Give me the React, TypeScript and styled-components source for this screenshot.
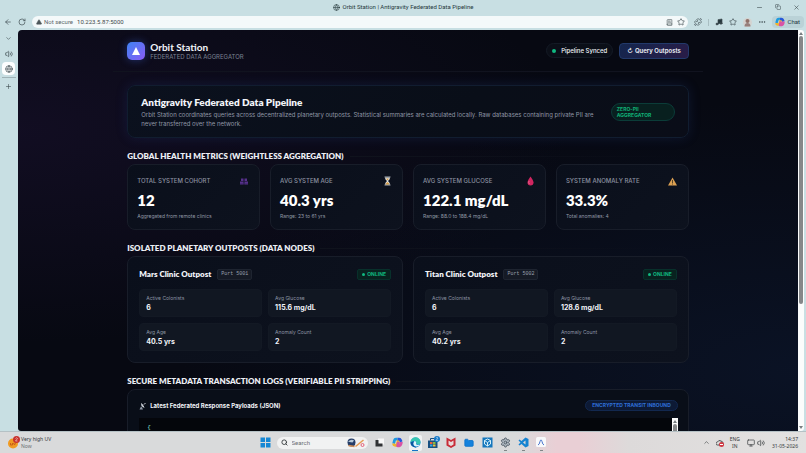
import React from "react";
import styled, { createGlobalStyle } from "styled-components";
import {
  ArrowLeft, RotateCw, ChevronDown, ChevronUp, Volume2, Globe, Plus, Minus, Copy, X, Star, Puzzle,
  Ellipsis, Search, Music, BookText, TriangleAlert, Monitor, Folder, Settings,
} from "lucide-react";

const chrome = `Roboto, "Open Sans", sans-serif`;
const ui = `"Noto Sans", "Open Sans", sans-serif`;
const body = `Inter, "Liberation Sans", sans-serif`;
const display = `Lato, Inter, sans-serif`;

const GlobalStyle = createGlobalStyle`
  *, *::before, *::after { box-sizing: border-box; }
  body { margin: 0; background: #c8dfe3; font-family: ${body}; }
  h1, h2, h3, p, dl, dt, dd { margin: 0; font-weight: inherit; }
  button, input { font: inherit; color: inherit; border: 0; padding: 0; margin: 0; background: none; outline: none; }
  svg { display: block; flex: none; }
`;

/* ---------- browser window ---------- */

const Desktop = styled.div`
  display: grid;
  grid-template-rows: auto auto minmax(0, 1fr) auto;
  height: 100vh;
  background: #c8dfe3;
  color: #3c4a4e;
`;

const TitleBar = styled.header`
  display: grid;
  grid-template-columns: 1fr auto 1fr;
  align-items: center;
  height: 14px;
  font: 6px/14px ${chrome};
`;

const PageTitle = styled.div`
  grid-column: 2;
  display: flex;
  align-items: center;
  gap: 3px;
  color: #26383d;
`;

const WindowButtons = styled.div`
  display: flex;
  justify-content: flex-end;
  gap: 12px;
  padding-right: 6px;
`;

const IconButton = styled.button`
  display: grid;
  place-items: center;
  flex: none;
`;

const ToolBar = styled.div`
  display: flex;
  align-items: center;
  gap: 6px;
  height: 16px;
  padding: 0 2px 0 4px;
`;

const AddressBar = styled.div`
  flex: 1;
  display: flex;
  align-items: center;
  gap: 4px;
  height: 12px;
  padding: 0 3px 0 4px;
  border-radius: 6px;
  background: #f4f9fa;
  font: 6px/12px ${chrome};
`;

const SecurityButton = styled.button`
  display: flex;
  align-items: center;
  gap: 2px;
  color: #5c6669;
`;

const AddressInput = styled.input`
  flex: 1;
  min-width: 0;
  height: 12px;
  color: #3f484b;
`;

const Tools = styled.div`
  display: flex;
  align-items: center;
  gap: 6px;
`;

const Divider = styled.span`
  width: 1px;
  height: 7px;
  background: #a9bec2;
`;

const ChatButton = styled.button`
  display: flex;
  align-items: center;
  gap: 3px;
  height: 12px;
  padding: 0 4px 0 3px;
  border-radius: 4px;
  background: #bad2d7;
  font: 6px/12px ${chrome};
  color: #26383d;
`;

const Workspace = styled.div`
  display: grid;
  grid-template-columns: 18px minmax(0, 1fr) 8px;
  min-height: 0;
`;

const TabRail = styled.nav`
  display: flex;
  flex-direction: column;
  align-items: center;
  gap: 1px;
  padding: 2px 1px 0 0;
`;

const RailButton = styled(IconButton)<{ $active?: boolean }>`
  width: 13px;
  height: 13px;
  margin-bottom: 1px;
  border-radius: 4px;
  background: ${(p) => (p.$active ? "#fdfefe" : "transparent")};
`;

const RailLine = styled.span`
  width: 14px;
  height: 1px;
  margin-bottom: 1px;
  background: #9fb2b6;
`;

const ScrollTrack = styled.div`
  display: flex;
  flex-direction: column;
  align-items: center;
  gap: 1px;
  width: 6px;
  padding: 2px 0;
  background: #fbfcfc;
  border-radius: 0 3px 3px 0;
`;

const Arrow = styled.span<{ $down?: boolean }>`
  border: 2px solid transparent;
  border-top-width: ${(p) => (p.$down ? "3px" : "0")};
  border-bottom-width: ${(p) => (p.$down ? "0" : "3px")};
  border-${(p) => (p.$down ? "top" : "bottom")}-color: #777d80;
`;

const Thumb = styled.span<{ $share: number }>`
  flex: ${(p) => p.$share} 0 0;
  width: 4px;
  border-radius: 2px;
  background: #858789;
`;

const Rest = styled.span<{ $share: number }>`
  flex: ${(p) => p.$share} 0 0;
`;

/* ---------- dashboard ---------- */

const Viewport = styled.main`
  overflow: hidden;
  min-height: 0;
  border-top-left-radius: 4px;
  border-bottom-left-radius: 3px;
  background:
    radial-gradient(ellipse at 0% 25%, rgba(48, 26, 80, 0.26), transparent 50%),
    radial-gradient(ellipse at 100% 85%, rgba(18, 40, 80, 0.3), transparent 56%),
    #070912;
  color: #f2f4f9;
`;

const Column = styled.div`
  width: 72%;
  max-width: 1080px;
  margin: 0 auto;
`;

const SiteHeader = styled.div`
  display: flex;
  align-items: center;
  justify-content: space-between;
  height: 42px;
  margin: 0 -14px 13px;
  padding: 0 14px;
  border-bottom: 1px solid #11131f;
`;

const Brand = styled.div`
  display: flex;
  align-items: center;
  gap: 5px;
`;

const Logo = styled.span`
  display: grid;
  place-items: center;
  width: 18px;
  height: 18px;
  border-radius: 5px;
  background: linear-gradient(135deg, #3f83f4, #8a5bf5);
  box-shadow: 0 0 8px rgba(66, 110, 240, 0.4);
`;

const BrandName = styled.h1`
  font: 700 10px/11px ${display};
`;

const BrandTag = styled.p`
  font: 6px/7px ${body};
  color: #7b8192;
`;

const Actions = styled.div`
  display: flex;
  align-items: center;
  gap: 6px;
`;

const SyncPill = styled.span`
  display: flex;
  align-items: center;
  gap: 5px;
  height: 15px;
  padding: 0 5px;
  border: 1px solid #141a25;
  border-radius: 8px;
  background: #0b0f18;
  font: 500 6px/13px ${body};
`;

const Dot = styled.i<{ $size: number }>`
  width: ${(p) => p.$size}px;
  height: ${(p) => p.$size}px;
  border-radius: 50%;
  background: #10b981;
`;

const QueryButton = styled.button`
  display: flex;
  align-items: center;
  gap: 2px;
  height: 16px;
  padding: 0 7px;
  border: 1px solid #22396a;
  border-radius: 4px;
  background: linear-gradient(135deg, #14264e, #291c47);
  font: 600 6px/14px ${body};
`;

const Banner = styled.section`
  display: flex;
  align-items: center;
  justify-content: space-between;
  gap: 14px;
  min-height: 53px;
  margin-bottom: 13px;
  padding: 0 13px;
  border: 1px solid #111d30;
  border-radius: 8px;
  background: linear-gradient(120deg, #0b111e, #090e18 60%, #0a0d18);
  box-shadow: 0 0 12px rgba(38, 62, 140, 0.24);
`;

const BannerTitle = styled.h2`
  margin-bottom: 2px;
  font: 800 10px/12px ${display};
`;

const BannerText = styled.p`
  font: 6px/9px ${body};
  color: #9097a6;
`;

const ZeroPii = styled.span`
  flex: none;
  width: 64px;
  padding: 2px 5px;
  border: 1px solid #0b3c38;
  border-radius: 9px;
  background: #08201f;
  font: 700 5px/6px ${body};
  color: #10b077;
`;

const SectionTitle = styled.h2`
  display: flex;
  align-items: center;
  gap: 6px;
  margin-bottom: 3px;
  font: 800 8px/10px ${display};
  color: #eceef4;
  &::after {
    content: "";
    flex: 1;
    height: 1px;
    background: linear-gradient(90deg, #10131d, transparent);
  }
`;

const Grid = styled.div<{ $columns: number; $gap: number }>`
  display: grid;
  grid-template-columns: repeat(${(p) => p.$columns}, minmax(0, 1fr));
  gap: ${(p) => p.$gap}px;
`;

const Cards = styled(Grid)`
  margin-bottom: 13px;
`;

const Card = styled.article`
  padding: 11px;
  border: 1px solid #181d29;
  border-radius: 8px;
  background: linear-gradient(135deg, #0a0f1b, #0d121e);
`;

const MetricCard = styled(Card)`
  padding: 10px 10px 9px 9px;
`;

const MetricHead = styled.div`
  display: flex;
  align-items: center;
  justify-content: space-between;
  height: 12px;
  margin-bottom: 5px;
  padding-right: 1px;
  font: 500 6px/12px ${body};
  color: #8c92a1;
`;

const MetricValue = styled.p`
  margin-bottom: 4px;
  font: 800 15px/17px ${display};
  color: #fff;
`;

const MetricNote = styled.p`
  font: 5px/7px ${body};
  color: #9299a7;
`;

const NodeHead = styled.div`
  display: flex;
  align-items: center;
  gap: 6px;
  height: 12px;
  margin-bottom: 9px;
`;

const NodeName = styled.h3`
  font: 800 8px/12px ${display};
`;

const Port = styled.code`
  padding: 0 3px;
  border: 1px solid #1e2430;
  border-radius: 2px;
  background: #151a25;
  font: 5px/9px "Liberation Mono", monospace;
  color: #9aa0ad;
`;

const Online = styled.span`
  display: flex;
  align-items: center;
  gap: 2px;
  margin-left: auto;
  padding: 0 4px;
  border: 1px solid #08302b;
  border-radius: 2px;
  background: #08221f;
  font: 700 5px/9px ${body};
  color: #10b981;
`;

const Stats = styled.dl`
  display: grid;
  grid-template-columns: repeat(2, minmax(0, 1fr));
  gap: 6px;
`;

const Stat = styled.div`
  height: 28px;
  padding: 5px 6px;
  border: 1px solid #131924;
  border-radius: 4px;
  background: #111722;
`;

const StatLabel = styled.dt`
  font: 5px/7px ${body};
  color: #8d94a3;
`;

const StatValue = styled.dd`
  margin-top: 1px;
  font: 700 7px/9px ${body};
`;

const LogHead = styled.div`
  display: flex;
  align-items: center;
  justify-content: space-between;
  height: 11px;
  margin-bottom: 7px;
`;

const LogTitle = styled.h3`
  display: flex;
  align-items: center;
  gap: 4px;
  font: 700 6px/11px ${body};
`;

const Transit = styled.span`
  padding: 0 6px;
  border: 1px solid #12284f;
  border-radius: 6px;
  background: #0d1a35;
  font: 700 5px/9px ${body};
  color: #2f70d8;
`;

const LogCard = styled(Card)`
  padding: 10px 10px 10px 11px;
  background: #090e18;
`;

const LogBox = styled.div`
  display: flex;
  justify-content: space-between;
  height: 120px;
  padding-left: 8px;
  background: #04060b;
`;

const Json = styled.pre`
  margin: 0;
  padding-top: 7px;
  font: 6px/6px "Liberation Mono", monospace;
  color: #8ee6dc;
`;

const LogScroll = styled(ScrollTrack)`
  border-radius: 0;
`;

/* ---------- taskbar ---------- */

const TaskBar = styled.footer`
  display: grid;
  grid-template-columns: 1fr auto 1fr;
  align-items: center;
  height: 22px;
  padding: 0 8px;
  border-top: 1px solid #b5c1c5;
  background: linear-gradient(90deg, #d9dadb 0 64%, #e9cfd5 69% 72%, #dddada 78%, #e2e1e0);
  font: 5px/7px ${ui};
  color: #34383a;
`;

const Weather = styled.button`
  display: flex;
  align-items: center;
  gap: 1px;
  text-align: left;
  line-height: 7px;
`;

const Muted = styled.span`
  display: block;
  color: #6b6f72;
`;

const Apps = styled.div`
  display: flex;
  align-items: center;
  gap: 5px;
`;

const AppButton = styled(IconButton)<{ $state?: "active" | "running" }>`
  position: relative;
  width: 13px;
  height: 16px;
  border-radius: 2px;
  background: ${(p) => (p.$state === "active" ? "#f0f2f3" : "transparent")};
  &::after {
    content: "";
    position: absolute;
    bottom: 0;
    width: ${(p) => (p.$state === "active" ? "6px" : "3px")};
    height: 1px;
    background: ${(p) => (p.$state === "active" ? "#1374c9" : p.$state ? "#828688" : "transparent")};
  }
`;

const SearchBox = styled.label`
  display: flex;
  align-items: center;
  gap: 4px;
  width: 91px;
  height: 12px;
  padding: 0 3px 0 4px;
  border-radius: 6px;
  background: #f1f2f2;
  font: 6px/12px ${chrome};
`;

const SearchInput = styled.input`
  flex: 1;
  min-width: 0;
  &::placeholder { color: #6b6f72; opacity: 1; }
`;

const Tray = styled.div`
  display: flex;
  align-items: center;
  justify-content: flex-end;
  gap: 6px;
`;

const Connectivity = styled.button`
  display: flex;
  gap: 2px;
  padding: 0 1px;
`;

const TrayText = styled.button<{ $align: "center" | "right" }>`
  text-align: ${(p) => p.$align};
  line-height: 7px;
`;

/* ---------- drawings ---------- */

const CopilotMark = ({ size }: { size: number }) => (
  <svg width={size} height={size} viewBox="0 0 20 20" fill="none" strokeWidth="5" strokeLinejoin="round">
    <path d="M10 4H7Q5 4 4.500 6L3 12" stroke="#1e9be0" />
    <path d="M3 12Q3 15 6 15H9L12 5" stroke="#f2b42c" />
    <path d="M10 4H13Q15 4 15.500 6L17 9" stroke="#2758d9" />
    <path d="M17 9Q17 15 13 16H10L12 9" stroke="#d853a5" />
  </svg>
);

const People = () => (
  <svg width="8" height="8" viewBox="0 0 16 16">
    <path d="M2 3H7V8H2ZM9 3H14V8H9ZM0 9H7V15H0ZM9 9H16V15H9Z" fill="#57308c" />
    <path d="M0 12H16V13H0ZM7 9H9V15H7Z" fill="#3b2566" />
  </svg>
);

const Hourglass = () => (
  <svg width="7" height="10" viewBox="0 0 14 20">
    <path d="M1 1H13V3H1ZM1 17H13V19H1Z" fill="#a8adb3" />
    <path d="M2 3H12Q12 7 8 10Q12 13 12 17H2Q2 13 6 10Q2 7 2 3Z" fill="#dfe5e8" />
    <path d="M4 5H10L7 9ZM3 17Q4 13 7 12Q10 13 11 17Z" fill="#d59b45" />
  </svg>
);

const Drop = () => (
  <svg width="7" height="10" viewBox="0 0 14 20">
    <path d="M7 1Q13 9 13 13A6 6 0 0 1 1 13Q1 9 7 1Z" fill="#d02660" />
    <path d="M4 10Q2 14 5 16" fill="none" stroke="#e5618c" strokeWidth="2" />
  </svg>
);

const Warning = () => (
  <svg width="9" height="9" viewBox="0 0 18 18">
    <path d="M9 1L18 17H0Z" fill="#dba052" />
    <path d="M9 6V12M9 13V15" stroke="#5a4526" strokeWidth="2" />
  </svg>
);

const Satellite = () => (
  <svg width="7" height="8" viewBox="0 0 14 16">
    <path d="M5 3Q2 9 10 11Z" fill="#aab1bc" />
    <path d="M5 3L10 11" stroke="#e4e7ec" strokeWidth="2" />
    <path d="M8 7L12 3" stroke="#e4e7ec" strokeWidth="1" />
    <circle cx="12" cy="3" r="1" fill="#e4e7ec" />
    <path d="M4 9L1 15H8L6 11Z" fill="#8f97a5" />
  </svg>
);

const EdgeMark = () => (
  <svg width="11" height="11" viewBox="0 0 22 22">
    <circle cx="11" cy="11" r="10" fill="#117dcc" />
    <path d="M1 11A10 10 0 0 1 21 10Q21 15 15 15Q12 15 13 12Q13 8 9 8Q4 8 1 11Z" fill="#36c6b2" />
    <path d="M9 8Q5 12 8 17Q11 20 17 18Q20 16 19 15Q14 17 12 14Q14 9 9 8Z" fill="#dff5fa" />
    <path d="M8 9Q4 13 8 18Q11 21 15 20A10 10 0 0 1 1 11Q4 8 8 9Z" fill="#0b579f" />
  </svg>
);

const SearchArt = () => (
  <svg width="18" height="10" viewBox="0 0 36 20">
    <circle cx="9" cy="9" r="8" fill="#263e68" /><path d="M2 7Q9 1 14 5L11 9L5 8Z" fill="#b8cad9" />
    <path d="M3 15L15 17" stroke="#d08b52" strokeWidth="3" />
    <path d="M17 17L33 4" stroke="#e59a51" strokeWidth="3" />
    <circle cx="31" cy="14" r="3" fill="none" stroke="#e46078" strokeWidth="2" />
  </svg>
);

const appIcons: { name: string; state?: "active" | "running"; art: React.ReactNode }[] = [
  { name: "Task view", art: <svg width="9" height="9" viewBox="0 0 18 18"><path d="M6 1H18V13H6Z" fill="#f7f7f7" /><path d="M1 4H7V11H15V17H1Z" fill="#303234" /></svg> },
  { name: "Copilot", art: <CopilotMark size={11} /> },
  { name: "Edge", state: "active", art: <EdgeMark /> },
  { name: "Store", art: <svg width="13" height="13" viewBox="0 0 26 26"><path d="M2 9H21V24H2Z" fill="#184f80" /><path d="M7 9V5H15V9" fill="none" stroke="#184f80" strokeWidth="2" /><path d="M6 12H11V16H6Z" fill="#e9603e" /><path d="M12 12H17V16H12Z" fill="#83bd43" /><path d="M6 17H11V21H6Z" fill="#37a9e2" /><path d="M12 17H17V21H12Z" fill="#f1bd3c" /><circle cx="20" cy="6" r="6" fill="#1479c8" /><path d="M18 4Q21 1 22 4L18 9H22" fill="none" stroke="#fff" /></svg> },
  { name: "McAfee", art: <svg width="10" height="11" viewBox="0 0 20 22"><path d="M1 1L10 6L19 1V17L10 22L1 17Z" fill="#c82c38" /><path d="M5 7V15L10 18L15 15V7L10 10Z" fill="#e8dada" /></svg> },
  { name: "Files", art: <Folder size={10} fill="#1482dd" color="#0d72c9" /> },
  { name: "Photos", art: <svg width="11" height="11" viewBox="0 0 22 22"><rect x="1" y="1" width="20" height="20" fill="#1577bd" /><path d="M11 4L17 7V14L11 18L5 14V7ZM5 7L11 11L17 7M11 11V18" fill="none" stroke="#d2effa" strokeWidth="2" /></svg> },
  { name: "Settings", state: "running", art: <Settings size={11} color="#4f5b66" fill="#aeb8c0" /> },
  { name: "Code", state: "running", art: <svg width="11" height="11" viewBox="0 0 22 22"><path fillRule="evenodd" d="M15 1L21 4V18L15 21L7 14L3 17L1 15L5 11L1 7L3 5L7 8ZM15 7L10 11L15 15Z" fill="#1683d1" /></svg> },
  { name: "Antigravity", state: "running", art: <svg width="10" height="11" viewBox="0 0 20 22"><rect width="20" height="20" rx="3" fill="#f8f9fb" /><path d="M4 16Q7 15 8 9Q10 2 12 9Q13 15 16 16" fill="none" stroke="#4774cd" strokeWidth="2" /></svg> },
];

/* ---------- data ---------- */

const metrics = [
  { label: "TOTAL SYSTEM COHORT", value: "12", note: "Aggregated from remote clinics", icon: <People /> },
  { label: "AVG SYSTEM AGE", value: "40.3 yrs", note: "Range: 23 to 61 yrs", icon: <Hourglass /> },
  { label: "AVG SYSTEM GLUCOSE", value: "122.1 mg/dL", note: "Range: 88.0 to 188.4 mg/dL", icon: <Drop /> },
  { label: "SYSTEM ANOMALY RATE", value: "33.3%", note: "Total anomalies: 4", icon: <Warning /> },
];

const nodes = [
  { name: "Mars Clinic Outpost", port: "Port 5001", stats: [["Active Colonists", "6"], ["Avg Glucose", "115.6 mg/dL"], ["Avg Age", "40.5 yrs"], ["Anomaly Count", "2"]] },
  { name: "Titan Clinic Outpost", port: "Port 5002", stats: [["Active Colonists", "6"], ["Avg Glucose", "128.6 mg/dL"], ["Avg Age", "40.2 yrs"], ["Anomaly Count", "2"]] },
];

export default function App() {
  return (
    <Desktop>
      <GlobalStyle />
      <TitleBar>
        <PageTitle><Globe size={7} />Orbit Station | Antigravity Federated Data Pipeline</PageTitle>
        <WindowButtons>
          <IconButton aria-label="Minimize"><Minus size={7} /></IconButton>
          <IconButton aria-label="Restore"><Copy size={6} /></IconButton>
          <IconButton aria-label="Close"><X size={7} /></IconButton>
        </WindowButtons>
      </TitleBar>
      <ToolBar>
        <IconButton aria-label="Back"><ArrowLeft size={8} /></IconButton>
        <IconButton aria-label="Reload"><RotateCw size={8} /></IconButton>
        <AddressBar>
          <SecurityButton>
            <TriangleAlert size={6} fill="#4b5558" />Not secure
          </SecurityButton>
          <AddressInput aria-label="Address" defaultValue="10.223.5.87:5000" />
          <IconButton aria-label="Reader"><BookText size={7} /></IconButton>
          <IconButton aria-label="Favorite"><Star size={8} /></IconButton>
        </AddressBar>
        <Tools>
          <IconButton aria-label="Extensions"><Puzzle size={8} /></IconButton>
          <Divider />
          <IconButton aria-label="Media"><Music size={8} fill="#26383d" /></IconButton>
          <IconButton aria-label="Favorites"><Star size={8} /></IconButton>
          <IconButton aria-label="Profile">
            <svg width="9" height="9" viewBox="0 0 18 18"><circle cx="9" cy="9" r="9" fill="#d4d3d0" /><circle cx="9" cy="6" r="4" fill="#8f7068" /><path d="M3 17Q3 10 9 10Q15 10 15 17Z" fill="#967f7b" /></svg>
          </IconButton>
          <IconButton aria-label="More"><Ellipsis size={8} /></IconButton>
          <ChatButton><CopilotMark size={10} />Chat</ChatButton>
        </Tools>
      </ToolBar>

      <Workspace>
        <TabRail>
          <RailButton aria-label="Tabs"><ChevronDown size={7} /></RailButton>
          <RailButton aria-label="Sound"><Volume2 size={8} /></RailButton>
          <RailButton aria-label="Orbit Station" $active><Globe size={8} /></RailButton>
          <RailLine />
          <RailButton aria-label="New tab"><Plus size={7} /></RailButton>
        </TabRail>

        <Viewport>
          <Column>
            <SiteHeader>
              <Brand>
                <Logo><svg width="8" height="8" viewBox="0 0 8 8"><path d="M4 0L8 8H0Z" fill="#fff" /></svg></Logo>
                <div>
                  <BrandName>Orbit Station</BrandName>
                  <BrandTag>FEDERATED DATA AGGREGATOR</BrandTag>
                </div>
              </Brand>
              <Actions>
                <SyncPill><Dot $size={4} />Pipeline Synced</SyncPill>
                <QueryButton><span>↻</span>Query Outposts</QueryButton>
              </Actions>
            </SiteHeader>

            <Banner>
              <div>
                <BannerTitle>Antigravity Federated Data Pipeline</BannerTitle>
                <BannerText>
                  Orbit Station coordinates queries across decentralized planetary outposts. Statistical summaries are
                  calculated locally. Raw databases containing private PII are never transferred over the network.
                </BannerText>
              </div>
              <ZeroPii>ZERO-PII AGGREGATOR</ZeroPii>
            </Banner>

            <SectionTitle>GLOBAL HEALTH METRICS (WEIGHTLESS AGGREGATION)</SectionTitle>
            <Cards $columns={4} $gap={10}>
              {metrics.map((m) => (
                <MetricCard key={m.label}>
                  <MetricHead>{m.label}{m.icon}</MetricHead>
                  <MetricValue>{m.value}</MetricValue>
                  <MetricNote>{m.note}</MetricNote>
                </MetricCard>
              ))}
            </Cards>

            <SectionTitle>ISOLATED PLANETARY OUTPOSTS (DATA NODES)</SectionTitle>
            <Cards $columns={2} $gap={10}>
              {nodes.map((n) => (
                <Card key={n.name}>
                  <NodeHead>
                    <NodeName>{n.name}</NodeName>
                    <Port>{n.port}</Port>
                    <Online><Dot $size={3} />ONLINE</Online>
                  </NodeHead>
                  <Stats>
                    {n.stats.map(([label, value]) => (
                      <Stat key={label}>
                        <StatLabel>{label}</StatLabel>
                        <StatValue>{value}</StatValue>
                      </Stat>
                    ))}
                  </Stats>
                </Card>
              ))}
            </Cards>

            <SectionTitle>SECURE METADATA TRANSACTION LOGS (VERIFIABLE PII STRIPPING)</SectionTitle>
            <LogCard>
              <LogHead>
                <LogTitle><Satellite />Latest Federated Response Payloads (JSON)</LogTitle>
                <Transit>ENCRYPTED TRANSIT INBOUND</Transit>
              </LogHead>
              <LogBox>
                <Json>{"{"}</Json>
                <LogScroll><Arrow /><Thumb $share={1} /></LogScroll>
              </LogBox>
            </LogCard>
          </Column>
        </Viewport>

        <ScrollTrack>
          <Arrow />
          <Thumb $share={69} />
          <Rest $share={31} />
          <Arrow $down />
        </ScrollTrack>
      </Workspace>

      <TaskBar>
        <Weather>
          <svg width="12" height="13" viewBox="0 0 24 26"><circle cx="10" cy="15" r="10" fill="#f19a22" /><path d="M5 14V18H9V14M11 14L13 18L15 14" fill="none" stroke="#c95f18" strokeWidth="2" /><circle cx="17" cy="7" r="7" fill="#c8322d" /><path d="M15 5Q18 2 19 5L15 10H19" fill="none" stroke="#fff" /></svg>
          <span>Very high UV<Muted>Now</Muted></span>
        </Weather>
        <Apps>
          <AppButton aria-label="Start">
            <svg width="11" height="11" viewBox="0 0 22 22" fill="#1687d4"><path d="M1 1H10V10H1ZM12 1H21V10H12ZM1 12H10V21H1ZM12 12H21V21H12Z" /></svg>
          </AppButton>
          <SearchBox>
            <Search size={7} strokeWidth={3} />
            <SearchInput aria-label="Search" placeholder="Search" />
            <SearchArt />
          </SearchBox>
          {appIcons.map((a) => (
            <AppButton key={a.name} aria-label={a.name} $state={a.state}>{a.art}</AppButton>
          ))}
        </Apps>
        <Tray>
          <IconButton aria-label="Hidden icons"><ChevronUp size={7} /></IconButton>
          <IconButton aria-label="Cloud sync">
            <svg width="8" height="8" viewBox="0 0 16 16"><path d="M3 12A3 3 0 0 1 3 6Q5 1 10 4Q15 5 14 10L12 12Z" fill="none" stroke="#4b5052" strokeWidth="2" /><circle cx="11" cy="11" r="5" fill="#d13842" /><path d="M8 11H14" stroke="#fff" strokeWidth="2" /></svg>
          </IconButton>
          <TrayText $align="center">ENG<br />IN</TrayText>
          <Connectivity aria-label="Network and sound"><Monitor size={8} /><Volume2 size={8} /></Connectivity>
          <TrayText $align="right">14:37<br />31-05-2026</TrayText>
        </Tray>
      </TaskBar>
    </Desktop>
  );
}
